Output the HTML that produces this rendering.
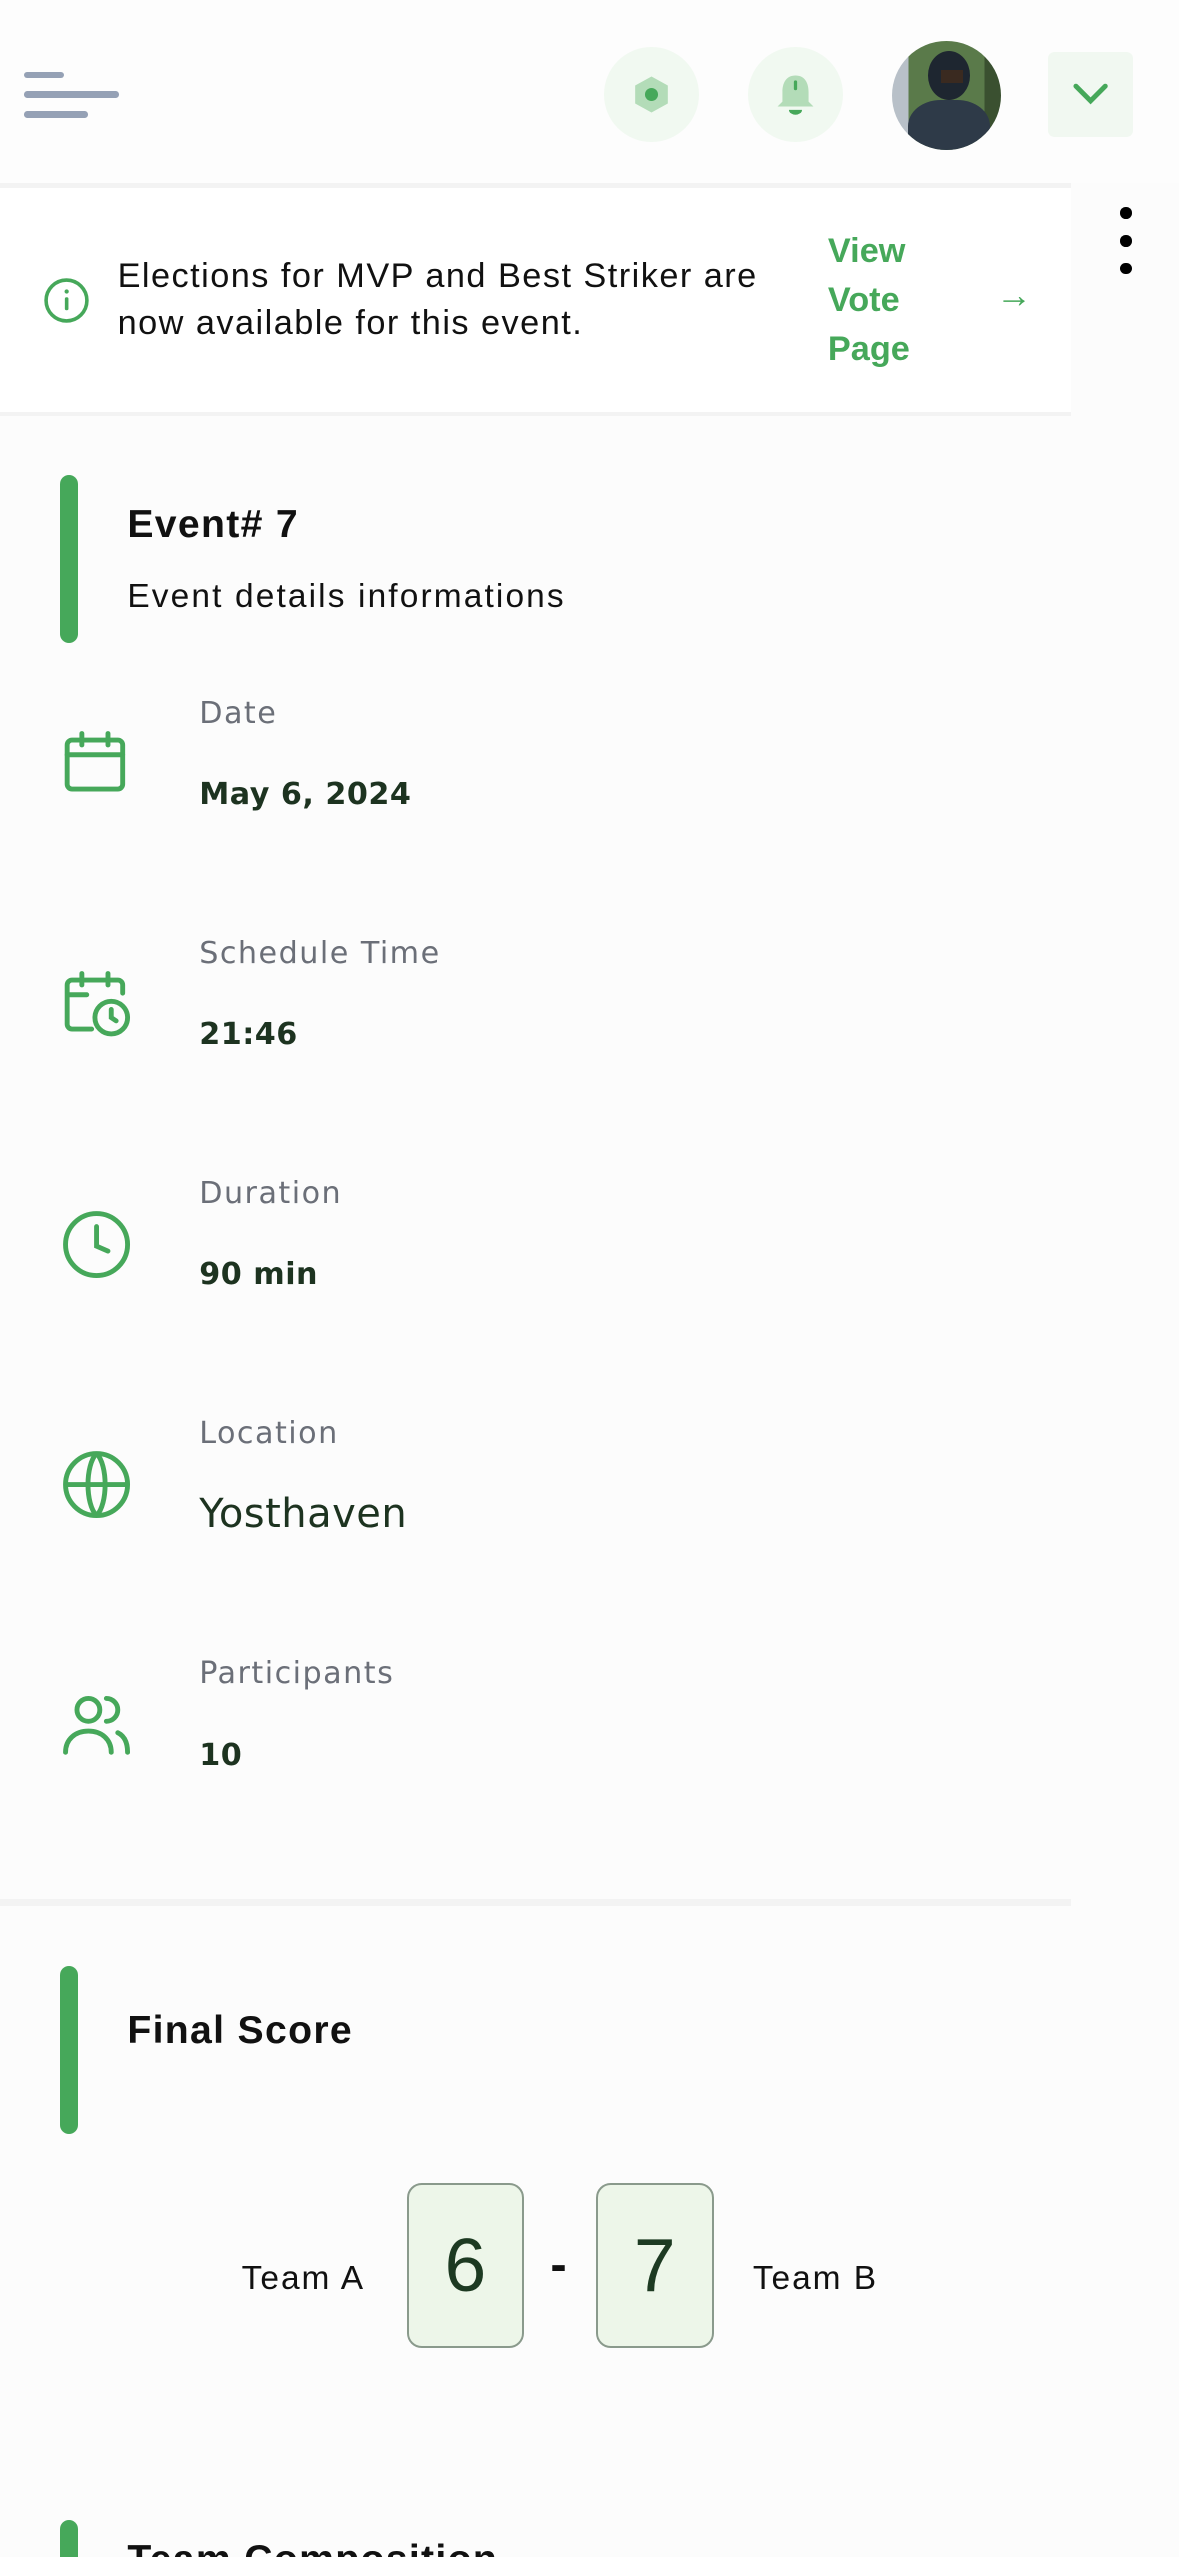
<!DOCTYPE html>
<html><head><meta charset="utf-8">
<style>
html,body{margin:0;padding:0;background:#fcfcfc;}
body{width:1179px;height:2556px;overflow:hidden;}
#w{zoom:1.633;width:722px;height:1566px;position:relative;font-family:"Liberation Sans",sans-serif;color:#111;overflow:hidden;}
.a{position:absolute;}
.lab{position:absolute;left:122px;font-family:"DejaVu Sans","Liberation Sans",sans-serif;font-size:18.5px;letter-spacing:0.9px;color:#6b6f78;}
.val{position:absolute;left:122px;font-family:"DejaVu Sans","Liberation Sans",sans-serif;font-size:18.5px;letter-spacing:0.3px;font-weight:bold;color:#1d3320;}
.ic{position:absolute;left:36px;width:46px;height:46px;}
.bar{position:absolute;left:37px;width:11px;background:#46a85a;border-radius:6px;}
.box{position:absolute;top:1337px;width:72px;height:101px;background:#edf6e9;border:1.5px solid #8a9a8c;border-radius:9px;box-sizing:border-box;text-align:center;font-size:46px;line-height:99px;color:#1d3a22;}
</style></head><body><div id="w">
<!-- header -->
<div class="a" style="left:0;top:0;width:722px;height:112px;background:#fdfdfd;"></div>
<div class="a" style="left:15px;top:44px;width:24px;height:4px;background:#95a1b5;border-radius:2px"></div>
<div class="a" style="left:15px;top:56px;width:58px;height:4px;background:#95a1b5;border-radius:2px"></div>
<div class="a" style="left:15px;top:68px;width:39px;height:4px;background:#95a1b5;border-radius:2px"></div>
<div class="a" style="left:370px;top:29px;width:58px;height:58px;border-radius:50%;background:#f1f9f1"></div>
<svg class="a" style="left:384px;top:43px" width="30" height="30" viewBox="0 0 30 30"><polygon points="15,4 25,9.5 25,20.5 15,26 5,20.5 5,9.5" fill="#b3dcb8"/><circle cx="15" cy="15" r="4" fill="#46a85a"/></svg>
<div class="a" style="left:458px;top:29px;width:58px;height:58px;border-radius:50%;background:#f1f9f1"></div>
<svg class="a" style="left:472px;top:42px" width="30" height="32" viewBox="0 0 30 32"><path d="M15 4c-6 0-8 5-8 10v6l-3 3h22l-3-3v-6c0-5-2-10-8-10z" fill="#b3dcb8"/><rect x="14" y="7" width="2" height="6" rx="1" fill="#46a85a"/><path d="M11 25h8a4 3 0 0 1-8 0z" fill="#46a85a"/></svg>
<div class="a" style="left:546px;top:25px;width:67px;height:67px;border-radius:50%;overflow:hidden;background:linear-gradient(90deg,#b8c0c8 0 15%,#5a7a4a 15% 85%,#3a5030 85%);">
 <div class="a" style="left:10px;top:36px;width:50px;height:40px;border-radius:40% 40% 0 0;background:#2e3a48"></div>
 <div class="a" style="left:22px;top:6px;width:26px;height:30px;border-radius:50%;background:#1e2630"></div>
 <div class="a" style="left:30px;top:18px;width:14px;height:8px;background:#3a2a20"></div>
</div>
<div class="a" style="left:642px;top:32px;width:52px;height:52px;border-radius:4px;background:#f1f8f1"></div>
<svg class="a" style="left:656px;top:48px" width="24" height="20" viewBox="0 0 24 20"><path d="M3 5l9 9 9-9" stroke="#46a85a" stroke-width="3" fill="none" stroke-linecap="round"/></svg>
<!-- banner -->
<div class="a" style="left:0;top:112px;width:656px;height:3px;background:#f3f3f3"></div>
<div class="a" style="left:0;top:115px;width:656px;height:137px;background:#fff"></div>
<div class="a" style="left:0;top:252px;width:656px;height:3px;background:#f3f3f3"></div>
<svg class="a" style="left:26px;top:169px" width="30" height="30" viewBox="0 0 30 30"><circle cx="15" cy="15" r="12.5" stroke="#46a85a" stroke-width="2.2" fill="none"/><rect x="14" y="13" width="2.2" height="8" rx="1" fill="#46a85a"/><circle cx="15.1" cy="9.5" r="1.3" fill="#46a85a"/></svg>
<div class="a" style="left:72px;top:155px;font-size:21px;letter-spacing:0.9px;line-height:29px;color:#111">Elections for MVP and Best Striker are<br>now available for this event.</div>
<div class="a" style="left:507px;top:139px;font-size:21px;line-height:30px;font-weight:bold;color:#46a85a">View<br>Vote<br>Page</div>
<div class="a" style="left:610px;top:168px;font-size:22px;color:#46a85a">→</div>
<div class="a" style="left:686px;top:127px;width:7px;height:7px;border-radius:50%;background:#000"></div>
<div class="a" style="left:686px;top:144px;width:7px;height:7px;border-radius:50%;background:#000"></div>
<div class="a" style="left:686px;top:161px;width:7px;height:7px;border-radius:50%;background:#000"></div>
<!-- event -->
<div class="bar" style="top:291px;height:103px"></div>
<div class="a" style="left:78px;top:308px;font-size:24px;letter-spacing:0.8px;font-weight:bold">Event# 7</div>
<div class="a" style="left:78px;top:354px;font-size:20.5px;letter-spacing:1.3px">Event details informations</div>

<svg class="ic" style="top:445px" viewBox="0 0 46 46"><rect x="5" y="8" width="34" height="30" rx="3" stroke="#46a85a" stroke-width="3" fill="none"/><path d="M5 17h34M14 4v7M30 4v7" stroke="#46a85a" stroke-width="3" stroke-linecap="round"/></svg>
<div class="lab" style="top:426px">Date</div>
<div class="val" style="top:476px">May 6, 2024</div>

<svg class="ic" style="top:592px" viewBox="0 0 46 46"><path d="M20 38H8a3 3 0 0 1-3-3V11a3 3 0 0 1 3-3h28a3 3 0 0 1 3 3v5M5 17h12M14 4v7M30 4v7" stroke="#46a85a" stroke-width="3" fill="none" stroke-linecap="round"/><circle cx="32" cy="31" r="10" stroke="#46a85a" stroke-width="3" fill="none"/><path d="M32 26v5l3 2" stroke="#46a85a" stroke-width="3" fill="none" stroke-linecap="round"/></svg>
<div class="lab" style="top:573px">Schedule Time</div>
<div class="val" style="top:623px">21:46</div>

<svg class="ic" style="top:739px" viewBox="0 0 46 46"><circle cx="23" cy="23" r="19" stroke="#46a85a" stroke-width="3" fill="none"/><path d="M23 12v12l7 3" stroke="#46a85a" stroke-width="3" fill="none" stroke-linecap="round"/></svg>
<div class="lab" style="top:720px">Duration</div>
<div class="val" style="top:770px">90 min</div>

<svg class="ic" style="top:886px" viewBox="0 0 46 46"><circle cx="23" cy="23" r="19" stroke="#46a85a" stroke-width="3" fill="none"/><path d="M4 23h38M23 4c-7 7-7 31 0 38M23 4c7 7 7 31 0 38" stroke="#46a85a" stroke-width="3" fill="none"/></svg>
<div class="lab" style="top:867px">Location</div>
<div class="a" style="left:122px;top:913px;font-family:'DejaVu Sans','Liberation Sans',sans-serif;font-size:24.5px;letter-spacing:0.3px;color:#1d3320">Yosthaven</div>

<svg class="ic" style="top:1033px" viewBox="0 0 46 46"><circle cx="18" cy="14" r="7" stroke="#46a85a" stroke-width="3" fill="none"/><path d="M4 40c0-8 6-13 14-13s14 5 14 13M29 7a7 7 0 0 1 0 14M36 28c4 2 6 6 6 12" stroke="#46a85a" stroke-width="3" fill="none" stroke-linecap="round"/></svg>
<div class="lab" style="top:1014px">Participants</div>
<div class="val" style="top:1064px">10</div>

<div class="a" style="left:0;top:1163px;width:656px;height:4px;background:#f3f3f3"></div>
<!-- final score -->
<div class="bar" style="top:1204px;height:103px"></div>
<div class="a" style="left:78px;top:1230px;font-size:24px;letter-spacing:0.8px;font-weight:bold">Final Score</div>
<div class="a" style="left:148px;top:1384px;font-size:20.5px;letter-spacing:1.2px">Team A</div>
<div class="box" style="left:249px">6</div>
<div class="a" style="left:337px;top:1370px;font-size:30px;font-weight:bold">-</div>
<div class="box" style="left:365px">7</div>
<div class="a" style="left:461px;top:1384px;font-size:20.5px;letter-spacing:1.2px">Team B</div>
<!-- team composition -->
<div class="bar" style="top:1543px;height:40px"></div>
<div class="a" style="left:78px;top:1554px;font-size:24px;letter-spacing:0.8px;font-weight:bold">Team Composition</div>
</div></body></html>
